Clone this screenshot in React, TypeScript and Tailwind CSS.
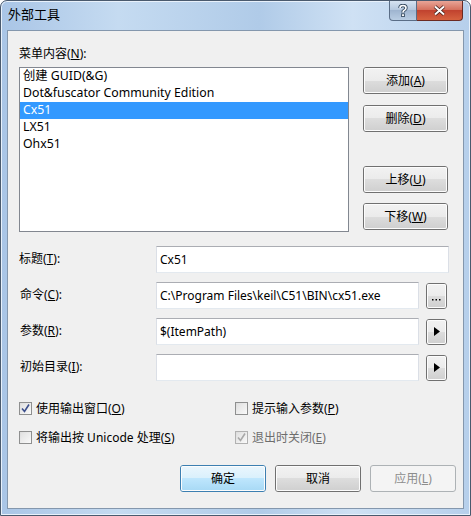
import React from "react";

const font = { fontFamily: '"Noto Sans", "Noto Sans CJK SC", sans-serif' };

function Btn({ children, isDefault, disabled, className = "" }: { children: React.ReactNode; isDefault?: boolean; disabled?: boolean; className?: string }) {
  const skin = disabled
    ? "border-[#adb2b5] bg-[#f4f4f4] text-[#8d8d8d]"
    : isDefault
    ? "border-[#3c7fb1] bg-[linear-gradient(#eaf6fd_0%,#d9f0fc_50%,#bee6fd_50%,#a7d9f5_100%)] text-black"
    : "border-[#707070] bg-[linear-gradient(#f2f2f2_0%,#ebebeb_50%,#dddddd_50%,#cfcfcf_100%)] text-black";
  return (
    <div className={`flex items-center justify-center rounded-[3px] border text-[12px] leading-none ${skin} ${className}`}>
      <div className={`rounded-[2px] ${disabled ? "" : "shadow-[inset_0_0_0_1px_#fcfcfc]"} flex h-full w-full items-center justify-center`}>
        {children}
      </div>
    </div>
  );
}

function TextBox({ value, className = "" }: { value?: string; className?: string }) {
  return (
    <div className={`flex h-[27px] items-center border border-[#abadb3] border-b-[#e3e9ef] border-x-[#dbdfe6] bg-white px-[3px] text-[12px] ${className}`}>
      {value}
    </div>
  );
}

function Check({ checked, disabled, label }: { checked?: boolean; disabled?: boolean; label: React.ReactNode }) {
  return (
    <div className={`flex items-center gap-[4px] text-[12px] ${disabled ? "text-[#6d6d6d]" : "text-black"}`}>
      <div className={`flex h-[13px] w-[13px] items-center justify-center border ${disabled ? "border-[#b1b1b1]" : "border-[#8e8f8f]"} bg-[linear-gradient(135deg,#dcdcdc,#fbfbfb)]`}>
        <div className="flex h-[9px] w-[9px] items-center justify-center bg-[linear-gradient(135deg,#e2e2e2,#f6f6f6)]">
          {checked && (
            <svg width="9" height="9" viewBox="0 0 9 9">
              <path d="M1 4.5 L3.5 7.5 L8 0.5" fill="none" stroke={disabled ? "#a8a8a8" : "#3c4f8c"} strokeWidth="1.6" />
            </svg>
          )}
        </div>
      </div>
      <span className="leading-none">{label}</span>
    </div>
  );
}

function Arrow() {
  return (
    <svg width="6" height="9" viewBox="0 0 6 9">
      <path d="M0 0 L6 4.5 L0 9 Z" fill="#000" />
    </svg>
  );
}

function Dots() {
  return (
    <svg width="9" height="12" viewBox="0 0 9 12">
      <rect x="0" y="9" width="1.5" height="1.5" fill="#000" />
      <rect x="3.5" y="9" width="1.5" height="1.5" fill="#000" />
      <rect x="7" y="9" width="1.5" height="1.5" fill="#000" />
    </svg>
  );
}

const items = ["创建 GUID(&G)", "Dot&fuscator Community Edition", "Cx51", "LX51", "Ohx51"];

export default function App() {
  return (
    <div style={font} className="h-[516px] w-[471px] overflow-hidden bg-white">
      <div className="flex h-full w-full flex-col rounded-t-[7px] border border-[#4a5a6e] bg-[linear-gradient(90deg,#a9c5e6_0%,#c5dbf1_25%,#b0cbe8_55%,#cfe1f4_75%,#b6cfeb_100%)] shadow-[inset_0_0_0_1px_#e8f1fb]">
        {/* title bar */}
        <div className="flex h-[29px] shrink-0 items-start">
          <div className="ml-[7px] mt-[7px] text-[13px] leading-none text-black">外部工具</div>
          <div className="ml-auto mr-[7px] flex h-[20px]">
            <div className="flex w-[28px] items-center justify-center rounded-bl-[4px] border border-t-0 border-[#5a6d86] bg-[linear-gradient(#d6e3f1,#b2c6dd_50%,#9fb5d0_50%,#b9cde3)]">
              <svg width="10" height="13" viewBox="0 0 10 13">
                <path d="M2 4 Q2 1.5 5 1.5 Q8 1.5 8 4 Q8 5.5 6 6.5 Q5 7 5 8.5" fill="none" stroke="#34495f" strokeWidth="3.4" />
                <path d="M2 4 Q2 1.5 5 1.5 Q8 1.5 8 4 Q8 5.5 6 6.5 Q5 7 5 8.5" fill="none" stroke="#fff" strokeWidth="1.6" />
                <rect x="3.6" y="9.8" width="2.8" height="2.8" fill="#fff" stroke="#34495f" strokeWidth="0.9" />
              </svg>
            </div>
            <div className="flex w-[46px] items-center justify-center rounded-br-[4px] border border-l-0 border-t-0 border-[#6b2a22] bg-[linear-gradient(#e8a597,#d5725f_45%,#c1432f_50%,#d6623f)]">
              <svg width="13" height="11" viewBox="0 0 13 11">
                <path d="M2 1.5 L11 9.5 M11 1.5 L2 9.5" stroke="#3f1d18" strokeWidth="3.6" />
                <path d="M2 1.5 L11 9.5 M11 1.5 L2 9.5" stroke="#fff" strokeWidth="2" />
              </svg>
            </div>
          </div>
        </div>

        {/* client area */}
        <div className="mx-[6px] mb-[6px] flex flex-1 flex-col border border-[#8497ad] bg-[#f0f0f0] pl-[11px] text-black">
          <div className="flex">
            <div className="flex w-[330px] flex-col">
              <div className="mt-[15px] h-[16px] text-[12px] leading-[16px]">
                菜单内容(<u>N</u>):
              </div>
              <div className="mt-[5px] h-[165px] border border-[#828790] bg-white text-[12.3px]">
                {items.map((it) => (
                  <div
                    key={it}
                    className={`flex h-[17px] items-center pl-[3px] leading-none ${it === "Cx51" ? "bg-[#3399ff] text-white" : ""}`}
                  >
                    {it}
                  </div>
                ))}
              </div>
            </div>
            <div className="ml-[14px] mt-[36px] flex w-[85px] flex-col">
              <Btn className="h-[27px]">添加(<u>A</u>)</Btn>
              <Btn className="mt-[11px] h-[27px]">删除(<u>D</u>)</Btn>
              <Btn className="mt-[34px] h-[27px]">上移(<u>U</u>)</Btn>
              <Btn className="mt-[10px] h-[27px]">下移(<u>W</u>)</Btn>
            </div>
          </div>

          <div className="mt-[14px] flex flex-col gap-[9px] text-[12px]">
            <div className="flex h-[27px] items-center">
              <div className="-mt-[2px] w-[137px]">标题(<u>T</u>):</div>
              <TextBox value="Cx51" className="w-[293px]" />
            </div>
            <div className="flex h-[27px] items-center">
              <div className="-mt-[2px] w-[137px] pl-[1px]">命令(<u>C</u>):</div>
              <TextBox value="C:\Program Files\keil\C51\BIN\cx51.exe" className="w-[263px]" />
              <Btn className="ml-[7px] h-[26px] w-[21px]">
                <Dots />
              </Btn>
            </div>
            <div className="flex h-[27px] items-center">
              <div className="-mt-[2px] w-[137px] pl-[1px]">参数(<u>R</u>):</div>
              <TextBox value="$(ItemPath)" className="w-[263px]" />
              <Btn className="ml-[7px] h-[26px] w-[21px]">
                <Arrow />
              </Btn>
            </div>
            <div className="flex h-[27px] items-center">
              <div className="-mt-[2px] w-[137px] pl-[1px]">初始目录(<u>I</u>):</div>
              <TextBox className="w-[263px]" />
              <Btn className="ml-[7px] h-[26px] w-[21px]">
                <Arrow />
              </Btn>
            </div>
          </div>

          <div className="mt-[21px] flex flex-col gap-[16px]">
            <div className="flex">
              <div className="w-[216px]">
                <Check checked label={<>使用输出窗口(<u>O</u>)</>} />
              </div>
              <Check label={<>提示输入参数(<u>P</u>)</>} />
            </div>
            <div className="flex">
              <div className="w-[216px]">
                <Check label={<>将输出按 Unicode 处理(<u>S</u>)</>} />
              </div>
              <Check checked disabled label={<>退出时关闭(<u>E</u>)</>} />
            </div>
          </div>

          <div className="mt-[21px] flex gap-[9px] pl-[161px]">
            <Btn isDefault className="h-[27px] w-[86px]">确定</Btn>
            <Btn className="h-[27px] w-[86px]">取消</Btn>
            <Btn disabled className="h-[27px] w-[86px]">应用(<u>L</u>)</Btn>
          </div>
        </div>
      </div>
    </div>
  );
}
